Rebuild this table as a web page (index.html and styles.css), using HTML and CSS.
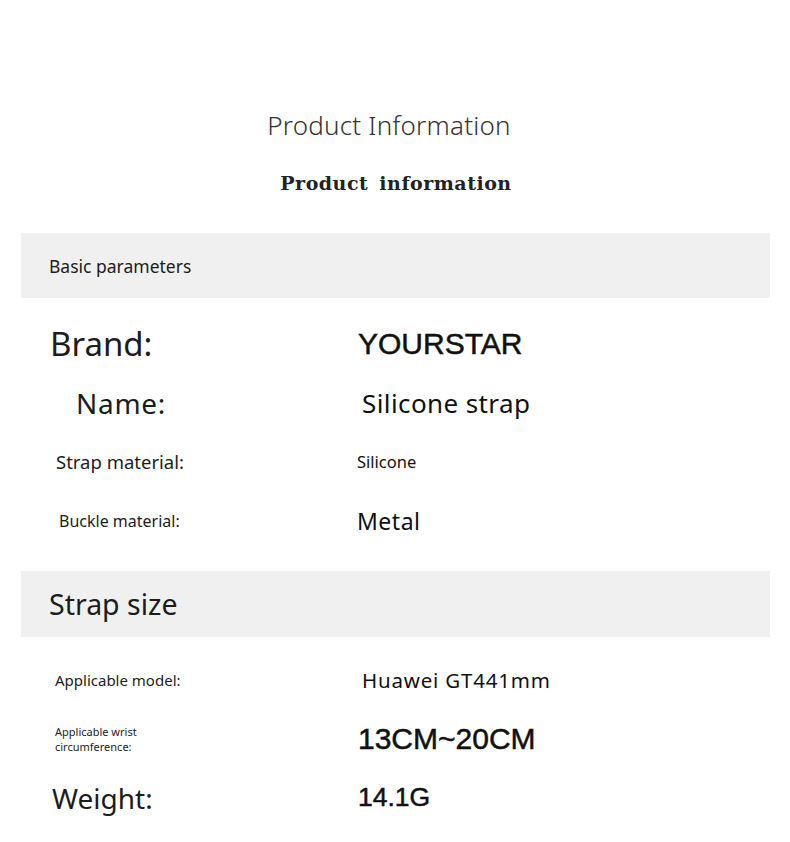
FILE: index.html
```html
<!DOCTYPE html>
<html lang="en">
<head>
    <meta charset="UTF-8">
    <meta name="viewport" content="width=device-width, initial-scale=1.0">
    <title>Product Information</title>
    <link rel="stylesheet" href="styles.css">
</head>
<body>
    <!-- Page heading -->
    <header class="baslik">
        <h1>Product Information</h1>
        <h2>Product information</h2>
    </header>

    <!-- Basic parameters -->
    <section class="bolum">
        <div class="bant bant-kucuk">Basic parameters</div>
        <div class="satirlar ilk">
            <div class="satir">
                <span class="etiket e-brand">Brand:</span>
                <span class="deger d-brand">YOURSTAR</span>
            </div>
            <div class="satir">
                <span class="etiket e-name">Name:</span>
                <span class="deger d-name">Silicone strap</span>
            </div>
            <div class="satir">
                <span class="etiket e-strap">Strap material:</span>
                <span class="deger d-silicone">Silicone</span>
            </div>
            <div class="satir">
                <span class="etiket e-buckle">Buckle material:</span>
                <span class="deger d-metal">Metal</span>
            </div>
        </div>
    </section>

    <!-- Strap size -->
    <section class="bolum">
        <div class="bant bant-buyuk">Strap size</div>
        <div class="satirlar ikinci">
            <div class="satir">
                <span class="etiket e-model">Applicable model:</span>
                <span class="deger d-model">Huawei GT441mm</span>
            </div>
            <div class="satir">
                <span class="etiket e-wrist"><span class="alt-satir">Applicable wrist</span><span class="alt-satir">circumference:</span></span>
                <span class="deger d-wrist">13CM~20CM</span>
            </div>
            <div class="satir">
                <span class="etiket e-weight">Weight:</span>
                <span class="deger d-weight">14.1G</span>
            </div>
        </div>
    </section>
</body>
</html>
```

FILE: styles.css
```css
/* Genel sayfa */
body {
    margin: 0;
    padding: 0;
    background: #ffffff;
    color: #1c1c1c;
    font-family: "Noto Sans", "Open Sans", sans-serif;
}

/* Başlık alanı */
.baslik {
    display: flex;
    flex-direction: column;
    align-items: center;
    padding-top: 106px;
    height: 127px;
}

.baslik h1 {
    margin: 0 12px 0 0;
    font-size: 26px;
    font-weight: 300;
    color: #333333;
    line-height: 38px;
    letter-spacing: 0.2px;
}

.baslik h2 {
    margin: 27px 0 0 2px;
    font-family: "DejaVu Serif", "Liberation Serif", serif;
    font-size: 19px;
    font-weight: bold;
    color: #222222;
    line-height: 24px;
    letter-spacing: 0.5px;
    word-spacing: 4px;
}

/* Gri bantlı bölümler */
.bolum {
    margin: 0 20px 0 21px;
}

.bolum + .bolum {
    margin-top: 21px;
}

.bant {
    background: #f0f0f0;
    display: flex;
    align-items: center;
    padding-left: 28px;
    color: #1c1c1c;
}

.bant-kucuk {
    height: 65px;
    font-size: 17.5px;
}

.bant-buyuk {
    height: 66px;
    font-size: 28.5px;
}

/* Satırlar */
.satirlar.ilk {
    padding-top: 16px;
}

.satirlar.ikinci {
    padding-top: 13px;
}

.satir {
    display: grid;
    grid-template-columns: 307px 1fr;
    align-items: center;
    height: 59px;
    padding-left: 29px;
}

.etiket {
    color: #1c1c1c;
}

.deger {
    color: #111111;
}

.e-brand { font-size: 33px; }
.e-name { font-size: 28px; margin-left: 26px; letter-spacing: 0.7px; }
.e-strap { font-size: 18.5px; margin-left: 6px; }
.e-buckle { font-size: 16px; margin-left: 9px; }
.e-model { font-size: 15px; margin-left: 5px; }
.e-weight { font-size: 28px; margin-left: 2px; }

/* İki satırlık küçük etiket */
.e-wrist {
    display: flex;
    flex-direction: column;
    font-size: 11px;
    line-height: 15px;
    margin-left: 5px;
}

/* Arial benzeri değerler biraz kalın görünüyor */
.d-brand,
.d-wrist,
.d-weight {
    font-family: "Liberation Sans", Arial, sans-serif;
    font-size: 30px;
    margin-left: 1px;
    -webkit-text-stroke: 0.5px #111111;
}

.d-weight { font-size: 26.5px; }

.d-name { font-size: 26px; margin-left: 5px; letter-spacing: 0.4px; }
.d-silicone { font-size: 16.5px; }
.d-metal { font-size: 23px; letter-spacing: 0.5px; }
.d-model { font-size: 20.5px; margin-left: 5px; letter-spacing: 0.8px; }
```
